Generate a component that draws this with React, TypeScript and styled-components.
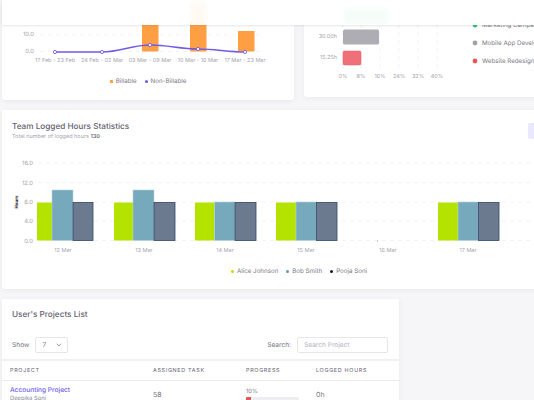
import React from "react";
import styled, { createGlobalStyle } from "styled-components";
import { ChevronDown } from "lucide-react";

const Global = createGlobalStyle`
  html, body { margin: 0; padding: 0; background: #f6f6f9; }
  body { font-family: Inter, "Noto Sans", sans-serif; color: #5d5a68; text-rendering: geometricPrecision; -webkit-font-smoothing: antialiased; }
  #root { width: 534px; height: 400px; overflow: hidden; position: relative; }
`;

const Page = styled.div`
  width: 534px;
  height: 400px;
  overflow: hidden;
  position: relative;
  background: #f6f6f9;
  filter: blur(0.4px);
`;
const Flow = styled.div`
  display: flex;
  flex-direction: column;
  gap: 10px;
  padding-left: 2px;
  width: 620px;
`;
const TopRow = styled.div`
  display: flex;
  align-items: flex-start;
  gap: 10px;
`;
const Card = styled.section<{ $w: number; $h: number }>`
  width: ${(p) => p.$w}px;
  height: ${(p) => p.$h}px;
  flex: none;
  background: #fff;
  border-radius: 0 0 3px 3px;
  box-shadow: 0 1px 5px rgba(75, 70, 92, 0.07);
  overflow: hidden;
`;
const StickyHeader = styled.header`
  position: absolute;
  top: 0;
  left: 2px;
  right: 0;
  height: 25px;
  background: rgba(255, 255, 255, 0.94);
  backdrop-filter: blur(2px);
  box-shadow: 0 1px 2px rgba(75, 70, 92, 0.14);
`;
const Chart = styled.svg`
  display: block;
  font-family: Inter, sans-serif;
`;
const Legend = styled.div<{ $top: number }>`
  display: flex;
  justify-content: center;
  gap: 8px;
  margin-top: ${(p) => p.$top}px;
  font-size: 6.2px;
  line-height: 9px;
  color: #7a7785;
`;
const LegendItem = styled.span`
  display: flex;
  align-items: center;
  gap: 3px;
`;
const Dot = styled.i<{ $c: string; $square?: boolean }>`
  width: 3px;
  height: 3px;
  background: ${(p) => p.$c};
  border-radius: ${(p) => (p.$square ? "0.5px" : "50%")};
`;
const TeamHead = styled.div`
  position: relative;
  padding: 11px 10px 0;
  height: 30px;
  box-sizing: border-box;
`;
const Title = styled.h2`
  margin: 0;
  font-size: 8.2px;
  line-height: 11px;
  font-weight: 500;
  color: #64616f;
`;
const Sub = styled.p`
  margin: 1px 0 0;
  font-size: 5.5px;
  line-height: 9px;
  color: #a5a3ae;
  b { font-weight: 600; color: #6f6b7d; }
`;
const RangeButton = styled.div`
  position: absolute;
  left: 526px;
  top: 13px;
  width: 50px;
  height: 16px;
  border-radius: 2px;
  background: #eae8fd;
`;
const TitleRow = styled.div`
  padding: 10px 10px 0;
  height: 36px;
  box-sizing: border-box;
`;
const Controls = styled.div`
  display: flex;
  align-items: center;
  justify-content: space-between;
  padding: 2px 11px 6px 10px;
  height: 26px;
  border-bottom: 2px solid #f1f0f3;
  box-sizing: border-box;
  font-size: 6.6px;
  color: #7a7785;
`;
const ControlGroup = styled.div`
  display: flex;
  align-items: center;
  gap: 6px;
`;
const SelectBox = styled.div`
  width: 33px;
  height: 16px;
  box-sizing: border-box;
  border: 1px solid #e6e5e8;
  border-radius: 2px;
  display: flex;
  align-items: center;
  justify-content: space-between;
  padding: 0 4px 0 6px;
`;
const SearchBox = styled.div`
  width: 91px;
  height: 16px;
  box-sizing: border-box;
  border: 1px solid #e6e5e8;
  border-radius: 2px;
  display: flex;
  align-items: center;
  padding: 0 6px;
  color: #b7b5be;
`;
const Row = styled.div<{ $head?: boolean }>`
  display: grid;
  grid-template-columns: 143px 93px 70px 1fr;
  padding: ${(p) => (p.$head ? "1px 0 0 8px" : "0 0 0 8px")};
  box-sizing: border-box;
  align-items: ${(p) => (p.$head ? "center" : "start")};
  height: ${(p) => (p.$head ? "20px" : "28px")};
  border-bottom: ${(p) => (p.$head ? "1px solid #ebeaed" : "none")};
  font-size: ${(p) => (p.$head ? "5.4px" : "7px")};
  letter-spacing: ${(p) => (p.$head ? "0.7px" : "0")};
  color: ${(p) => (p.$head ? "#64616f" : "#7a7785")};
`;
const ProjectCell = styled.div`
  padding-top: 5px;
`;
const ProjectName = styled.div`
  font-size: 6.6px;
  line-height: 9px;
  color: #6f5bf0;
  font-weight: 500;
`;
const ProjectOwner = styled.div`
  font-size: 5.8px;
  line-height: 8px;
  color: #8a8794;
`;
const ProgressCell = styled.div`
  padding-top: 7px;
`;
const Percent = styled.div`
  font-size: 5.8px;
  line-height: 8px;
  margin-bottom: 1px;
`;
const Track = styled.div`
  width: 53px;
  height: 4px;
  border-radius: 1px;
  background: #eeedf0;
  overflow: hidden;
`;
const Fill = styled.div`
  height: 100%;
  background: #ea5455;
`;
const RowCell = styled.div`
  padding-top: 9px;
  line-height: 9px;
`;

const axis = { fontSize: 5.5, fill: "#a5a3ae" };

function TopLeftChart() {
  const pts: [number, number][] = [[55, 52], [102, 52], [150, 45], [198, 49], [245, 52]];
  const labels: [number, string][] = [
    [55, "17 Feb - 23 Feb"], [102, "24 Feb - 02 Mar"], [150, "03 Mar - 09 Mar"],
    [198, "10 Mar - 16 Mar"], [245, "17 Mar - 23 Mar"],
  ];
  return (
    <Chart width={292} height={74} viewBox="2 0 292 74">
      {[35, 51.5].map((y) => (
        <line key={y} x1={40} x2={262} y1={y} y2={y} stroke="#eeedf0" strokeWidth={0.7} strokeDasharray="4 4" />
      ))}
      <text x={34} y={36} textAnchor="end" {...axis} fontSize={5.8}>10.0</text>
      <text x={34} y={52.5} textAnchor="end" {...axis} fontSize={5.8}>0.0</text>
      {[[142, 24], [190, 2], [238, 31]].map(([x, y]) => (
        <rect key={x} x={x} y={y} width={16.5} height={51.5 - y} rx={0.6} fill="#ff9f43" />
      ))}
      <path
        d="M55 52 C70 52 85 52 102 52 C120 52 132 45 150 45 C168 45 180 49 198 49 C215 49 228 52 245 52"
        fill="none" stroke="#6f5be8" strokeWidth={1.3}
      />
      {pts.map(([x, y]) => (
        <circle key={x} cx={x} cy={y} r={1.6} fill="#fff" stroke="#6f5be8" strokeWidth={0.9} />
      ))}
      {labels.map(([x, t]) => (
        <text key={t} x={x} y={62} textAnchor="middle" {...axis}>{t}</text>
      ))}
    </Chart>
  );
}

function TopRightChart() {
  const xs: [number, string][] = [[39, "0%"], [57, "8%"], [76, "16%"], [95, "24%"], [114, "32%"], [133, "40%"]];
  const legend: [number, string, string][] = [
    [25, "#28c76f", "Marketing Campaign"],
    [43, "#a0a0a8", "Mobile App Development"],
    [61, "#ea5455", "Website Redesign"],
  ];
  return (
    <Chart width={292} height={97} viewBox="304 0 292 97">
      {xs.map(([x]) => (
        <line key={x} x1={x + 304} x2={x + 304} y1={0} y2={69} stroke="#eeedf0" strokeWidth={0.7} strokeDasharray="4 4" />
      ))}
      <rect x={343} y={8} width={45} height={16} rx={1} fill="#28c76f" opacity={0.7} />
      <rect x={343} y={29.5} width={36} height={15} rx={1.5} fill="#adadb3" />
      <rect x={343} y={51} width={18} height={14} rx={1.5} fill="#ef7078" stroke="#ef5a62" strokeWidth={0.5} />
      <text x={337} y={38} textAnchor="end" {...axis}>30.00h</text>
      <text x={337} y={59} textAnchor="end" {...axis}>15.25h</text>
      {xs.map(([x, t]) => (
        <text key={t} x={x + 304} y={78} textAnchor="middle" {...axis}>{t}</text>
      ))}
      {legend.map(([y, c, t]) => (
        <g key={t}>
          <circle cx={475} cy={y} r={2.4} fill={c} />
          <text x={482} y={y + 2.2} fontSize={6.2} fill="#7a7785">{t}</text>
        </g>
      ))}
    </Chart>
  );
}

function TeamChart() {
  const ticks: [number, string][] = [[163, "16.0"], [182.5, "12.0"], [202, "8.0"], [221, "4.0"], [240.5, "0.0"]];
  const groups: { x: [number, number, number, number]; blue: number; label: string; cx: number }[] = [
    { x: [37, 52, 73, 93], blue: 190, label: "12 Mar", cx: 63 },
    { x: [114, 133, 154, 175], blue: 190, label: "13 Mar", cx: 144 },
    { x: [195, 214.5, 235, 256], blue: 202, label: "14 Mar", cx: 225 },
    { x: [276, 296, 316.5, 337], blue: 202, label: "15 Mar", cx: 306 },
    { x: [438, 458, 478.5, 499], blue: 202, label: "17 Mar", cx: 468 },
  ];
  return (
    <Chart width={594} height={127} viewBox="2 140 594 127">
      {ticks.map(([y, t]) => (
        <g key={t}>
          <line x1={38} x2={596} y1={y} y2={y} stroke="#eeedf0" strokeWidth={0.7} strokeDasharray="4 4" />
          <text x={33} y={y + 2} textAnchor="end" {...axis} fontSize={5.8}>{t}</text>
        </g>
      ))}
      <text transform="translate(17.5 202) rotate(-90)" textAnchor="middle" fontSize={4.4} fontWeight={700} fill="#222">Hours</text>
      {groups.map((g) => (
        <g key={g.label}>
          <rect x={g.x[0]} y={202.5} width={g.x[1] - g.x[0]} height={38} fill="#b5e300" />
          <rect x={g.x[1]} y={g.blue} width={g.x[2] - g.x[1]} height={240.5 - g.blue} fill="#75a9bb" stroke="#b6d4de" strokeWidth={0.6} />
          <rect x={g.x[2]} y={202.5} width={g.x[3] - g.x[2]} height={38} fill="#6b7a8f" stroke="#34466a" strokeWidth={0.8} />
          <text x={g.cx} y={252} textAnchor="middle" {...axis}>{g.label}</text>
        </g>
      ))}
      <circle cx={377.5} cy={241} r={0.5} fill="#5b8ea3" />
      <text x={388} y={252} textAnchor="middle" {...axis}>16 Mar</text>
    </Chart>
  );
}

export default function App() {
  return (
    <>
      <Global />
      <Page>
        <Flow>
          <TopRow>
            <Card $w={292} $h={100}>
              <TopLeftChart />
              <Legend $top={3}>
                <LegendItem><Dot $c="#ff9f43" $square />Billable</LegendItem>
                <LegendItem><Dot $c="#6f5be8" />Non-Billable</LegendItem>
              </Legend>
            </Card>
            <Card $w={292} $h={97}>
              <TopRightChart />
            </Card>
          </TopRow>
          <Card $w={594} $h={179}>
            <TeamHead>
              <Title>Team Logged Hours Statistics</Title>
              <Sub>Total number of logged hours <b>130</b></Sub>
              <RangeButton />
            </TeamHead>
            <TeamChart />
            <Legend $top={0}>
              <LegendItem><Dot $c="#b5e300" />Alice Johnson</LegendItem>
              <LegendItem><Dot $c="#5b9db5" />Bob Smith</LegendItem>
              <LegendItem><Dot $c="#10183a" />Pooja Soni</LegendItem>
            </Legend>
          </Card>
          <Card $w={397} $h={110}>
            <TitleRow><Title>User's Projects List</Title></TitleRow>
            <Controls>
              <ControlGroup>
                Show
                <SelectBox>7<ChevronDown size={8} color="#6f6b7d" /></SelectBox>
              </ControlGroup>
              <ControlGroup>
                Search:
                <SearchBox>Search Project</SearchBox>
              </ControlGroup>
            </Controls>
            <Row $head>
              <div>PROJECT</div>
              <div>ASSIGNED TASK</div>
              <div>PROGRESS</div>
              <div>LOGGED HOURS</div>
            </Row>
            <Row>
              <ProjectCell>
                <ProjectName>Accounting Project</ProjectName>
                <ProjectOwner>Deepika Soni</ProjectOwner>
              </ProjectCell>
              <RowCell>58</RowCell>
              <ProgressCell>
                <Percent>10%</Percent>
                <Track><Fill style={{ width: "10%" }} /></Track>
              </ProgressCell>
              <RowCell>0h</RowCell>
            </Row>
          </Card>
        </Flow>
        <StickyHeader />
      </Page>
    </>
  );
}
